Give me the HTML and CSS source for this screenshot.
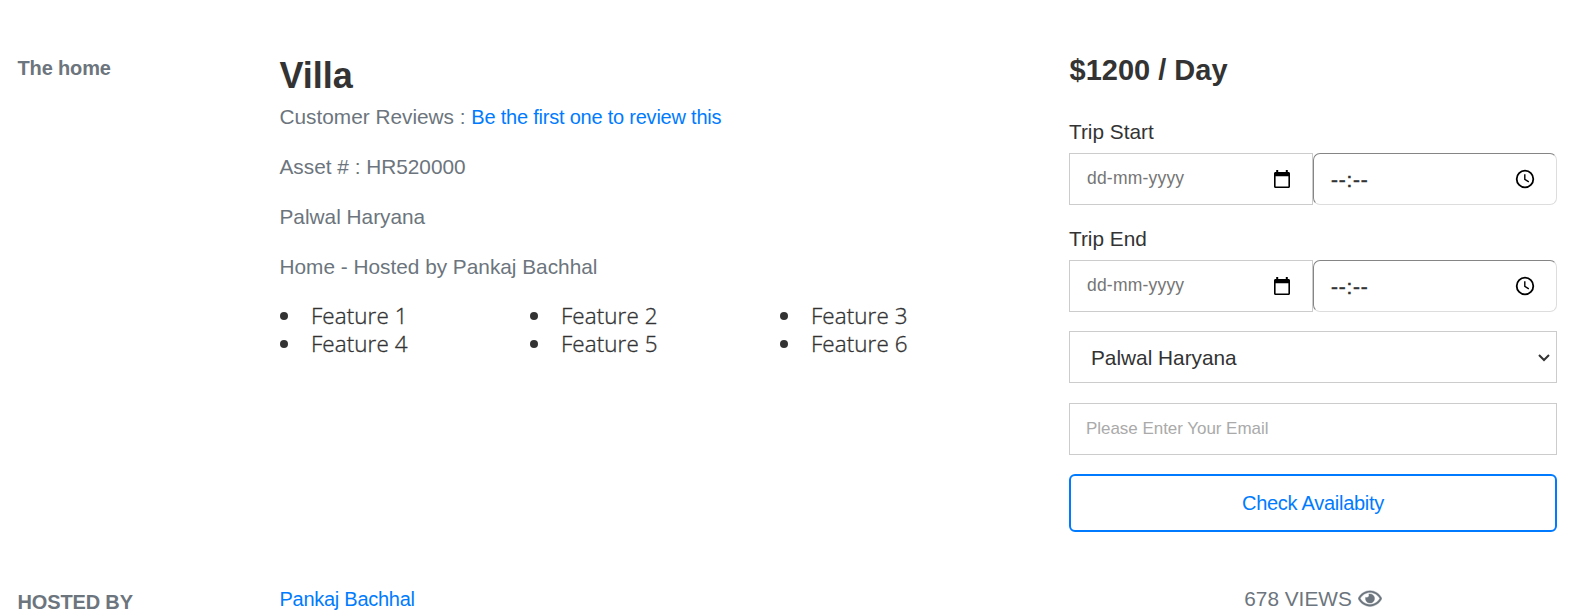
FILE: index.html
```
<!DOCTYPE html>
<html lang="en">
<head>
<meta charset="utf-8">
<title>Villa</title>
<link rel="stylesheet" href="styles.css">
</head>
<body>
<main class="page">
  <section class="row listing">
    <h2 class="side-label">The home</h2>
    <div class="details">
      <h1 class="title">Villa</h1>
      <p class="reviews">Customer Reviews : <a class="link" href="#">Be the first one to review this</a></p>
      <p class="asset">Asset # : HR520000</p>
      <p class="place">Palwal Haryana</p>
      <p class="host">Home - Hosted by Pankaj Bachhal</p>
      <ul class="features">
        <li>Feature 1</li><li>Feature 2</li><li>Feature 3</li>
        <li>Feature 4</li><li>Feature 5</li><li>Feature 6</li>
      </ul>
    </div>
    <div class="booking">
      <h3 class="price">$1200 / Day</h3>
      <div class="label start">Trip Start</div>
      <div class="pair">
        <div class="date"><span>dd-mm-yyyy</span>
          <svg class="cal" viewBox="0 0 16 18"><path fill-rule="evenodd" d="M2.2 0h2v2h7.6V0h2v2h.7c.9 0 1.500.6 1.500 1.500v13c0 .9-.6 1.500-1.500 1.500h-13C.6 18 0 17.400 0 16.500v-13C0 2.600.6 2 1.500 2h.7zM1.600 6.300v10.100h12.800V6.300z"/></svg></div>
        <div class="time"><span>--:--</span>
          <svg class="clock" viewBox="0 0 20 20"><circle cx="10" cy="10" r="8.300"/><path d="M9.800 5.300v5.100l4 2.400"/></svg></div>
      </div>
      <div class="label">Trip End</div>
      <div class="pair">
        <div class="date"><span>dd-mm-yyyy</span>
          <svg class="cal" viewBox="0 0 16 18"><path fill-rule="evenodd" d="M2.2 0h2v2h7.6V0h2v2h.7c.9 0 1.500.6 1.500 1.500v13c0 .9-.6 1.500-1.500 1.500h-13C.6 18 0 17.400 0 16.500v-13C0 2.600.6 2 1.500 2h.7zM1.600 6.300v10.100h12.800V6.300z"/></svg></div>
        <div class="time"><span>--:--</span>
          <svg class="clock" viewBox="0 0 20 20"><circle cx="10" cy="10" r="8.300"/><path d="M9.800 5.300v5.100l4 2.400"/></svg></div>
      </div>
      <div class="field select"><span>Palwal Haryana</span>
        <svg class="chevron" viewBox="0 0 12 8"><path d="M1 1l5 5 5-5"/></svg></div>
      <div class="field email"><span>Please Enter Your Email</span></div>
      <button class="check"><span>Check Availabity</span></button>
    </div>
  </section>
  <section class="row hosted">
    <h2 class="side-label hosted-label">HOSTED BY</h2>
    <div class="details"><a class="link host-link" href="#">Pankaj Bachhal</a></div>
    <div class="booking views"><span>678 VIEWS</span>
      <svg class="eye" viewBox="0 0 576 512"><path d="M288 144a110.940 110.940 0 0 0-31.240 5 55.400 55.400 0 0 1 7.240 27 56 56 0 0 1-56 56 55.400 55.400 0 0 1-27-7.240A111.710 111.710 0 1 0 288 144zm284.520 97.400C518.290 135.590 410.930 64 288 64S57.680 135.640 3.480 241.410a32.350 32.350 0 0 0 0 29.190C57.710 376.410 165.070 448 288 448s230.320-71.640 284.520-177.410a32.350 32.350 0 0 0 0-29.190zM288 400c-98.650 0-189.090-55-237.930-144C98.910 167 189.340 112 288 112s189.090 55 237.930 144C477.100 345 386.660 400 288 400z"/></svg></div>
  </section>
</main>
</body>
</html>
```
FILE: styles.css
```
* { box-sizing: border-box; }
body { margin: 0; background: #fff; color: #333; font: 20px/30px "Liberation Sans", Arial, sans-serif; overflow: hidden; }
h1, h2, h3, p, ul { margin: 0; padding: 0; }
.page { height: 612px; padding: 53px 13px 0 17.500px; overflow: hidden; }
.row { display: grid; grid-template-columns: 262px 789.500px 488px; }
.listing { height: 531px; }
.side-label { font-size: 20px; line-height: 30px; font-weight: 700; letter-spacing: -.15px; color: #6c757d; }
.title { font-size: 36px; line-height: 44px; padding-top: 1px; }
.details p { color: #6c757d; font-size: 20.800px; height: 30px; margin-bottom: 20px; }
.reviews { margin-top: 4px; }
.link { color: #007bff; text-decoration: none; font-size: 20px; letter-spacing: -.22px; }
.features { display: grid; grid-template-columns: repeat(3, 250px); grid-auto-rows: 28px; list-style: none; font: 300 22.400px/28px "Open Sans", sans-serif; letter-spacing: .1px; -webkit-text-stroke: .35px #333; }
.features li { display: flex; align-items: center; gap: 23.500px; }
.features li::before { content: ""; width: 8px; height: 8px; border-radius: 50%; background: #333; }
.booking { display: flex; flex-direction: column; }
.price { font-size: 29px; line-height: 34px; padding-left: .5px; }
.label { height: 30px; margin: 19px 0 6px; font-size: 20.800px; }
.label.start { margin-top: 30px; }
.pair { display: grid; grid-template-columns: 244px 244px; }
.date, .time, .field { display: flex; align-items: center; justify-content: space-between; height: 52px; border: 1px solid #ccc; padding: 0 22px 0 17px; }
.date { color: #757575; font-size: 17.500px; }
.date span { margin-top: -3px; letter-spacing: .2px; }
.time { border-color: #858585 #ddd #ddd #858585; border-radius: 7px; padding-right: 21px; }
.time span { padding-top: 1px; font-size: 20.800px; letter-spacing: .8px; -webkit-text-stroke: .5px #333; }
.cal { width: 16px; height: 18px; fill: #000; }
.clock { width: 20px; height: 20px; fill: none; stroke: #000; stroke-width: 1.800; }
.clock path { stroke-width: 1.400; }
.field { margin-top: 19px; }
.select { padding: 0 6px 0 21px; font-size: 20.800px; }
.select span { padding-top: 1px; }
.chevron { width: 12px; height: 8px; margin-top: 1px; fill: none; stroke: #333; stroke-width: 2; }
.email { margin-top: 20px; padding: 0 16px; font-size: 17px; letter-spacing: -.04px; color: #aaa; }
.check { height: 58px; margin-top: 19px; border: 2px solid #007bff; border-radius: 6px; padding: 0; background: #fff; color: #007bff; font: 20px/30px "Liberation Sans", Arial, sans-serif; letter-spacing: -.27px; }
.hosted-label { padding-top: 3px; }
.host-link { letter-spacing: -.27px; }
.views { flex-direction: row; justify-content: center; gap: 6px; font-size: 20.800px; color: #6c757d; }
.eye { width: 24px; height: 21px; margin-top: 4px; fill: #6c757d; stroke: #6c757d; stroke-width: 8; }
```
